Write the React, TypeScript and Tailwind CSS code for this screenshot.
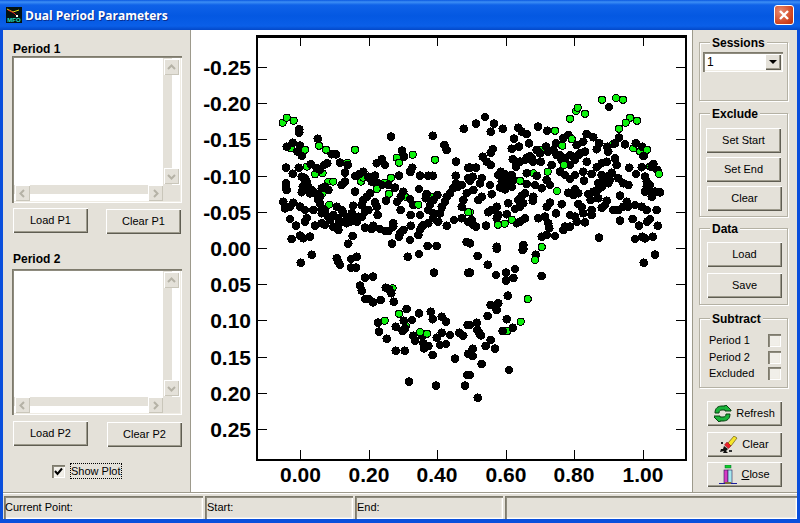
// App.tsx - Dual Period Parameters dialog
import React from "react";

type Pt = [number, number];

// points read off the plot in 3x crops: [crop x, crop y]
const crop = (ox: number, oy: number, pts: number[]): Pt[] => {
  const out: Pt[] = [];
  for (let i = 0; i < pts.length; i += 2) out.push([ox + pts[i] / 3, oy + pts[i + 1] / 3]);
  return out;
};

const black: Pt[] = [
  ...crop(250, 30, [
    148,298,148,308,203,326,423,320,548,317,641,296,110,350,128,338,150,347,155,360,155,377,145,365,
    245,373,258,373,270,398,293,405,456,362,462,380,380,400,395,388,405,405,583,345,590,360,618,395,655,413,
    108,413,128,431,146,413,182,403,200,415,210,420,222,405,232,400,285,428,315,438,328,432,340,425,355,440,375,437,
    447,437,487,413,480,425,510,437,535,437,548,437,617,437,655,445,155,440,165,445,170,455,158,470,175,470,185,480,195,490,155,487,
    108,460,108,470,110,480,215,475,225,470,235,480,285,455,275,465,365,455,385,460,395,465,415,465,435,473,507,477,315,485,
    360,490,350,500,340,510,335,525,460,485,452,500,442,515,530,492,527,505,550,510,562,495,
    618,460,610,475,600,490,590,500,585,515,575,530,635,465,625,470,650,490,640,510,635,530,
    100,515,130,518,105,535,120,530,150,530,165,540,190,540,210,500,210,520,215,535,225,545,235,560,
    260,530,275,540,250,555,265,565,280,550,295,560,305,550,310,527,375,517,380,530,408,512,480,507,490,525,452,540,
    383,555,482,555,510,555,540,525,535,540,550,550,570,550,120,567,170,565,165,575,138,587,195,587,215,580,225,585,250,590,
    265,600,280,575,300,575,320,575,335,560,345,545,355,540,345,593,365,597,370,587,390,597,405,603,415,603,430,580,430,590,
    460,600,450,610,447,620,482,587,515,590,510,600,505,615,520,585,535,580,550,565,565,575,590,587,612,570,635,565,655,575,
    125,627,150,617,160,625,180,620,308,618,295,641,426,641,480,630,533,648,560,648,650,636,
    170,480,205,510,215,550,240,570,270,575,260,590,290,580,310,570,325,560,165,455,180,490,
  ]),
  ...crop(470, 30, [
    45,261,18,281,72,281,62,305,98,296,145,293,155,305,170,312,204,290,232,302,132,326,177,340,125,356,147,350,68,358,62,368,38,380,50,395,62,405,
    18,413,0,413,128,388,150,395,138,410,170,383,165,390,180,378,190,395,212,395,200,360,210,370,228,350,235,365,258,340,250,360,270,375,285,385,245,405,
    280,325,295,315,320,345,340,335,350,312,370,322,388,340,345,365,325,375,315,390,300,405,350,395,380,358,412,350,415,365,435,340,447,323,465,343,497,340,517,350,520,378,
    435,385,410,395,395,400,380,412,440,405,478,413,515,412,498,432,550,402,562,420,545,410,92,425,85,435,105,432,125,435,130,450,170,430,200,437,
    270,425,285,435,300,447,315,435,340,425,365,432,425,428,395,435,8,440,0,452,35,445,30,460,60,465,110,465,90,472,105,478,125,470,
    170,462,195,465,215,475,230,450,240,465,342,452,400,450,385,460,395,470,415,460,445,445,460,460,475,465,525,440,530,455,540,465,525,485,545,500,555,485,570,487,
    10,480,35,500,25,510,65,493,155,497,165,490,145,510,190,500,188,512,295,488,315,478,310,495,325,490,355,492,370,485,383,480,362,510,450,497,
    385,505,410,512,405,525,395,533,115,520,275,523,240,518,230,530,160,520,150,530,135,537,80,530,65,540,55,547,325,522,335,532,
    470,515,475,530,460,530,495,525,515,530,430,540,445,540,530,540,560,540,85,555,110,553,80,565,258,550,365,540,365,555,340,550,
    300,555,315,560,320,575,285,590,205,565,225,560,165,565,150,575,140,580,235,580,238,595,450,572,488,567,540,567,532,575,507,587,563,587,
    345,577,300,590,280,600,5,570,10,585,18,590,48,587,230,615,215,620,255,618,387,623,495,627,517,620,525,625,548,620,0,640,80,650,160,645,160,657,417,231,
    100,440,115,440,95,455,175,385,185,385,300,375,310,380,260,375,275,390,330,370,410,440,420,450,530,470,540,480,
  ]),
  ...crop(250, 250, [
    152,38,185,14,260,25,265,35,270,45,303,27,320,20,303,53,318,53,345,83,369,80,473,20,507,12,552,68,655,68,
    330,107,335,122,345,147,357,147,369,157,392,150,431,155,407,113,418,118,424,130,470,177,507,190,542,185,
    384,218,387,245,410,266,437,230,437,302,464,302,461,212,486,210,465,235,458,243,490,257,495,272,517,258,520,280,522,295,535,288,
    548,208,575,200,588,215,653,225,575,248,560,263,570,285,588,282,600,255,628,248,640,257,548,315,615,326,655,311,652,375,477,395,558,407,645,407,
  ]),
  ...crop(470, 250, [
    23,18,53,44,108,68,135,57,78,75,130,84,108,92,215,78,0,68,197,14,158,0,80,-4,113,137,85,160,62,165,80,180,53,198,110,208,20,218,
    0,225,22,240,28,250,33,256,98,243,128,233,62,270,47,288,75,296,8,296,8,318,35,342,117,360,0,375,23,443,555,14,521,38,
  ]),
];

const greenUnder: Pt[] = [
  ...crop(250, 30, [122,355,142,365,170,410,195,433,218,430,235,455,250,455,292,398,333,455,340,443,358,440,403,458,482,427,218,490,238,524,265,585,465,500,547,500,575,533]),
  ...crop(470, 30, [318,243,428,343,490,355,510,365,522,378,540,410,190,430,215,360,0,547]),
  ...crop(250, 250, [428,115,468,228]),
  ...crop(470, 250, [112,243]),
];

const greenTop: Pt[] = [
  ...crop(250, 30, [98,278,110,263,131,272,165,359,207,347,228,359,315,359,440,383,447,398,488,374,555,389,423,443,380,477,417,491,505,524,655,547]),
  ...crop(470, 30, [396,209,438,204,459,209,323,233,345,251,300,266,480,263,501,272,467,278,447,296,255,302,305,327,277,347,531,359,282,405,233,425,150,452,261,483,125,569,84,584,104,581,215,651,567,432]),
  ...crop(250, 250, [404,212,447,191,510,247,531,251]),
  ...crop(470, 250, [195,30,173,147,152,215]),
];

const yTicks: [string, number][] = [
  ["-0.25", 67], ["-0.20", 103], ["-0.15", 139], ["-0.10", 176], ["-0.05", 212], ["0.00", 248],
  ["0.05", 284], ["0.10", 320], ["0.15", 357], ["0.20", 393], ["0.25", 429],
];
const xTicks: [string, number][] = [
  ["0.00", 300.5], ["0.20", 369], ["0.40", 437], ["0.60", 506], ["0.80", 574], ["1.00", 643],
];

const bevel = "shadow-[inset_1px_1px_0_#ffffff,inset_-1px_-1px_0_#5f5d52,inset_-2px_-2px_0_#9d9a8c]";
const sunken = "shadow-[inset_1px_1px_0_#7d7a6c,inset_2px_2px_0_#8e8b7e,inset_-1px_-1px_0_#ffffff,inset_-2px_-2px_0_#efece4]";

function Btn({ className = "", children }: { className?: string; children: React.ReactNode }) {
  return (
    <button className={`flex h-[25px] w-[75px] items-center justify-center gap-1 text-[11px] text-black ${bevel} ${className}`}>
      {children}
    </button>
  );
}

function Arrow({ dir }: { dir: "up" | "down" | "left" | "right" }) {
  const pts = {
    up: "2,7 5.5,3.5 9,7",
    down: "2,4 5.5,7.5 9,4",
    left: "7,2 3.5,5.5 7,9",
    right: "4,2 7.5,5.5 4,9",
  }[dir];
  return (
    <svg width="11" height="11" viewBox="0 0 11 11">
      <polyline points={pts} fill="none" stroke="#b5b2a6" strokeWidth="2" />
    </svg>
  );
}

function ListBox({ className = "h-[147px]" }: { className?: string }) {
  return (
    <div className={`flex w-[170px] flex-col bg-white p-[2px] ${className} ${sunken}`}>
      <div className="flex min-h-0 flex-1">
        <div className="flex-1" />
        <div className="flex w-[17px] bg-[linear-gradient(90deg,#e4e1d9_0,#e4e1d9_9px,#ffffff_9px)] py-[1px]">
          <div className="ml-[1px] flex w-[15px] flex-col justify-between">
            <div className="flex h-[16px] items-center justify-center bg-[#e4e1d9] shadow-[inset_1px_1px_0_#ffffff,inset_-1px_-1px_0_#c9c6ba]">
              <Arrow dir="up" />
            </div>
            <div className="flex h-[16px] items-center justify-center bg-[#e4e1d9] shadow-[inset_1px_1px_0_#ffffff,inset_-1px_-1px_0_#c9c6ba]">
              <Arrow dir="down" />
            </div>
          </div>
        </div>
      </div>
      <div className="flex h-[16px]">
        <div className="flex w-[149px] justify-between bg-[linear-gradient(180deg,#e4e1d9_0,#e4e1d9_9px,#ffffff_9px)] pl-[1px]">
          <div className="flex w-[15px] items-center justify-center bg-[#e4e1d9] shadow-[inset_1px_1px_0_#ffffff,inset_-1px_-1px_0_#c9c6ba]">
            <Arrow dir="left" />
          </div>
          <div className="flex w-[15px] items-center justify-center bg-[#e4e1d9] shadow-[inset_1px_1px_0_#ffffff,inset_-1px_-1px_0_#c9c6ba]">
            <Arrow dir="right" />
          </div>
        </div>
        <div className="flex-1 bg-[#e4e1d9]" />
      </div>
    </div>
  );
}

function Group({ title, className, children }: { title: string; className: string; children?: React.ReactNode }) {
  return (
    <div className={`relative w-[89px] border border-[#b4b1a4] shadow-[1px_1px_0_#ffffff,inset_1px_1px_0_#ffffff] ${className}`}>
      <span className="absolute left-[10px] top-[-7px] bg-[#e4e1d9] px-[2px] text-[12px] font-bold leading-[14px] text-black">
        {title}
      </span>
      {children}
    </div>
  );
}

function CheckBox({ checked = false }: { checked?: boolean }) {
  return (
    <div className={`flex h-[13px] w-[13px] items-center justify-center bg-[#f1efe9] ${sunken}`}>
      {checked && (
        <svg width="9" height="9" viewBox="0 0 9 9">
          <path d="M1 4 L3.5 7 L8 1.5" fill="none" stroke="#000" strokeWidth="2" />
        </svg>
      )}
    </div>
  );
}

function RefreshIcon() {
  return (
    <svg width="18" height="17" viewBox="0 0 18 17">
      <path d="M1 8 C1 3 4 1 8 1 L11 1 L11 0 L12 0 L17 5 L17 6 L11 6 L11 5 L8 5 C6 5 5 6 5 8 Z" fill="#19b33a" stroke="#06400f" strokeWidth="1" />
      <path d="M16 9 C16 14 13 16 9 16 L6 16 L6 17 L5 17 L0 12 L0 11 L6 11 L6 12 L9 12 C11 12 12 11 12 9 Z" fill="#19b33a" stroke="#06400f" strokeWidth="1" />
    </svg>
  );
}

function BrushIcon() {
  return (
    <svg width="18" height="17" viewBox="0 0 18 17">
      <path d="M14 0 L17 2 L11 10 L8 7 Z" fill="#f6e52a" stroke="#6b5a10" strokeWidth="0.7" />
      <path d="M7 6 L11 10 L8.5 12.5 L4.5 9 Z" fill="#ea1f2a" stroke="#7a1016" strokeWidth="0.5" />
      <path d="M4 10 L8 13 L6 15 L8 17 L3 17 L4 15 L0 16 L1 13 L3 13 Z" fill="#111" />
      <rect x="1" y="6" width="2" height="2" fill="#222" />
      <rect x="9" y="14" width="3" height="2" fill="#333" />
    </svg>
  );
}

function CloseIcon() {
  return (
    <svg width="18" height="20" viewBox="0 0 18 20">
      <rect x="6" y="0" width="6" height="3" fill="#10cc2a" stroke="#063" strokeWidth="0.5" />
      <rect x="5" y="5" width="4" height="13" fill="#d63bc4" stroke="#2a1b55" strokeWidth="0.6" />
      <rect x="9" y="5" width="4" height="13" fill="#a6e8f0" stroke="#2a1b55" strokeWidth="0.6" />
      <rect x="0" y="18" width="18" height="1" fill="#1b1b9c" />
      <rect x="6" y="17" width="6" height="2" fill="#7d6a3c" />
    </svg>
  );
}

function TitleIcon() {
  return (
    <svg width="16" height="16" viewBox="0 0 16 16">
      <rect width="16" height="16" fill="#04120f" />
      <path d="M1 2 L7 5 L13 3" fill="none" stroke="#e6e01c" strokeWidth="1" />
      <path d="M2 3 L8 6 L11 9" fill="none" stroke="#e02020" strokeWidth="1" />
      <rect x="10" y="8" width="2" height="2" fill="#ffffff" />
      <text x="8" y="15" textAnchor="middle" fill="#22e0c8" className="text-[6px] font-bold">MFO</text>
    </svg>
  );
}

function Plot() {
  return (
    <svg width="500" height="462" viewBox="192 30 500 462" className="block" shapeRendering="crispEdges">
      <rect x="257" y="36.5" width="429" height="423.5" fill="#fff" stroke="#000" strokeWidth="2.5" />
      {yTicks.map(([label, y]) => (
        <g key={label}>
          <line x1="257" x2="267" y1={y} y2={y} stroke="#000" />
          <line x1="676" x2="686" y1={y} y2={y} stroke="#000" />
          <text x="251" y={y + 8} textAnchor="end" className="text-[21px] font-bold" fill="#000">
            {label}
          </text>
        </g>
      ))}
      {xTicks.map(([label, x]) => (
        <g key={label}>
          <line x1={x} x2={x} y1="36" y2="46" stroke="#000" />
          <line x1={x} x2={x} y1="450" y2="460" stroke="#000" />
          <text x={x} y="482" textAnchor="middle" className="text-[21px] font-bold" fill="#000">
            {label}
          </text>
        </g>
      ))}
      {greenUnder.map(([x, y], i) => (
        <circle key={i} cx={x} cy={y} r="3.5" fill="#0cf00c" stroke="#000" />
      ))}
      {black.map(([x, y], i) => (
        <circle key={i} cx={x} cy={y} r="4.3" fill="#000" />
      ))}
      {greenTop.map(([x, y], i) => (
        <circle key={i} cx={x} cy={y} r="3.6" fill="#0cf00c" stroke="#000" />
      ))}
    </svg>
  );
}

export default function App() {
  return (
    <div className="flex h-[523px] w-[800px] flex-col overflow-hidden bg-[#0a4fdc] font-['Liberation_Sans',sans-serif] text-black">
      {/* Title bar */}
      <div className="flex h-[30px] items-center bg-[linear-gradient(180deg,#0a58e0_0,#3d8ff5_2px,#0f62e8_5px,#0458e2_16px,#0a5fe8_26px,#0348c8_30px)] px-[6px]">
        <TitleIcon />
        <span className="ml-[3px] mt-[1px] font-['Open_Sans',sans-serif] text-[12px] font-bold text-white [text-shadow:1px_1px_0_#0a2f90]">
          Dual Period Parameters
        </span>
        <div className="ml-auto flex h-[20px] w-[20px] items-center justify-center rounded-[3px] border border-white bg-[radial-gradient(circle_at_30%_30%,#e88a70,#d0421e_70%,#b8300e)]">
          <svg width="12" height="12" viewBox="0 0 12 12">
            <path d="M2 2 L10 10 M10 2 L2 10" stroke="#fff" strokeWidth="2.4" />
          </svg>
        </div>
      </div>

      <div className="mx-[3px] flex min-h-0 flex-1 bg-[#e4e1d9]">
        {/* Left column */}
        <div className="flex w-[188px] flex-col border-r border-[#9d9a8c] pl-[9px] pt-[13px]">
          <div className="h-[13px] pl-px text-[12px] font-bold leading-[13px]">Period 1</div>
          <ListBox />
          <div className="ml-[1px] mt-[5px] flex items-start gap-[18px]">
            <Btn>Load P1</Btn>
            <Btn className="mt-[1px]">Clear P1</Btn>
          </div>
          <div className="mt-[19px] h-[16px] pl-px text-[12px] font-bold leading-[13px]">Period 2</div>
          <ListBox className="h-[146px]" />
          <div className="ml-[1px] mt-[6px] flex items-start gap-[19px]">
            <Btn>Load P2</Btn>
            <Btn className="mt-[1px]">Clear P2</Btn>
          </div>
          <div className="ml-[40px] mt-[16px] flex items-center gap-[5px]">
            <CheckBox checked />
            <span className="flex h-[16px] items-center border border-dotted border-black text-[11px] leading-none">Show Plot</span>
          </div>
        </div>

        {/* Plot */}
        <div className="w-[501px] bg-white pl-px">
          <Plot />
        </div>

        {/* Right column */}
        <div className="flex flex-1 flex-col border-l border-[#9d9a8c] pl-[6px] pt-[12px]">
          <Group title="Sessions" className="h-[59px]">
            <div className={`ml-[3px] mt-[9px] flex h-[20px] w-[80px] items-center justify-between bg-white p-[2px] ${sunken}`}>
              <span className="pl-[2px] text-[12px] leading-none">1</span>
              <span className={`flex h-[16px] w-[16px] items-center justify-center bg-[#e4e1d9] ${bevel}`}>
                <svg width="8" height="4" viewBox="0 0 8 4"><path d="M0 0 H8 L4 4 Z" fill="#000" /></svg>
              </span>
            </div>
          </Group>
          <Group title="Exclude" className="mt-[12px] h-[104px] pl-[6px] pt-[14px]">
            <Btn>Set Start</Btn>
            <Btn className="mt-[4px]">Set End</Btn>
            <Btn className="ml-[1px] mt-[4px]">Clear</Btn>
          </Group>
          <Group title="Data" className="mt-[11px] h-[77px] pl-[7px] pt-[13px]">
            <Btn>Load</Btn>
            <Btn className="mt-[6px]">Save</Btn>
          </Group>
          <Group title="Subtract" className="mt-[13px] h-[70px] pl-[9px] pr-[6px] pt-[13px] text-[11px]">
            <div className="flex h-[17px] items-center justify-between">Period 1 <CheckBox /></div>
            <div className="flex h-[16px] items-center justify-between">Period 2 <CheckBox /></div>
            <div className="flex h-[17px] items-center justify-between">Excluded <CheckBox /></div>
          </Group>
          <Btn className="ml-[8px] mt-[13px]"><RefreshIcon /> Refresh</Btn>
          <Btn className="ml-[8px] mt-[6px]"><BrushIcon /> Clear</Btn>
          <Btn className="ml-[8px] mt-[5px]"><CloseIcon /> <span><u>C</u>lose</span></Btn>
        </div>
      </div>

      {/* Status bar */}
      <div className="mx-[3px] flex h-[27px] gap-[2px] border-t border-[#9d9a8c] bg-[#e4e1d9] pl-px pt-[3px] text-[11px] leading-[23px] shadow-[inset_0_1px_0_#ffffff]">
        <div className={`h-[23px] w-[199px] pl-[1px] ${sunken}`}>Current Point:</div>
        <div className={`h-[23px] w-[148px] pl-[2px] ${sunken}`}>Start:</div>
        <div className={`h-[23px] w-[148px] pl-[2px] ${sunken}`}>End:</div>
        <div className={`h-[23px] flex-1 ${sunken}`} />
      </div>
      <div className="h-[4px]" />
    </div>
  );
}
